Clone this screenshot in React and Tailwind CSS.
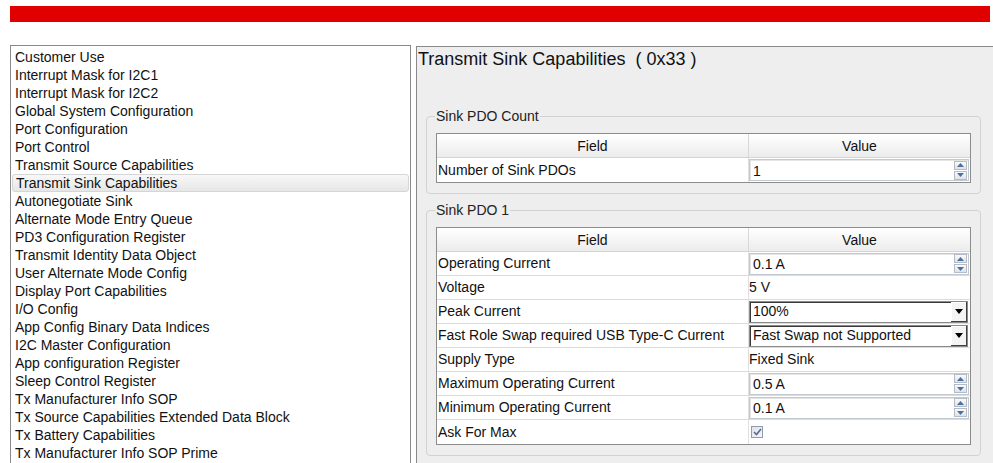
import React from 'react';

const items = [
    'Customer Use',
    'Interrupt Mask for I2C1',
    'Interrupt Mask for I2C2',
    'Global System Configuration',
    'Port Configuration',
    'Port Control',
    'Transmit Source Capabilities',
    'Transmit Sink Capabilities',
    'Autonegotiate Sink',
    'Alternate Mode Entry Queue',
    'PD3 Configuration Register',
    'Transmit Identity Data Object',
    'User Alternate Mode Config',
    'Display Port Capabilities',
    'I/O Config',
    'App Config Binary Data Indices',
    'I2C Master Configuration',
    'App configuration Register',
    'Sleep Control Register',
    'Tx Manufacturer Info SOP',
    'Tx Source Capabilities Extended Data Block',
    'Tx Battery Capabilities',
    'Tx Manufacturer Info SOP Prime',
];

const Spinner = ({ value }) => (
    <div className="flex h-[22px] w-full items-center border border-[#c3c9d2] bg-white shadow-[inset_1px_1px_0_#e4e4e4]">
        <span className="flex-1 pl-[3px] pt-[2px]">{value}</span>
        <div className="mr-[1px] flex flex-col gap-[1px]">
            <div className="flex h-[9px] w-[13px] items-center justify-center border border-[#b4bcc8] bg-gradient-to-b from-[#fafafa] to-[#e2e2e2]">
                <svg width="7" height="4" viewBox="0 0 7 4"><path d="M0 4 L3.5 0 L7 4 Z" fill="#4a6ea8" /></svg>
            </div>
            <div className="flex h-[9px] w-[13px] items-center justify-center border border-[#b4bcc8] bg-gradient-to-b from-[#fafafa] to-[#e2e2e2]">
                <svg width="7" height="4" viewBox="0 0 7 4"><path d="M0 0 L3.5 4 L7 0 Z" fill="#4a6ea8" /></svg>
            </div>
        </div>
    </div>
);

const Dropdown = ({ value }) => (
    <div className="flex h-[22px] w-[219px] items-center border border-[#8a8a8a] bg-white shadow-[inset_1px_1px_0_#3a3a3a]">
        <span className="flex-1 pl-[3px]">{value}</span>
        <div className="flex h-[20px] w-[16px] flex-col items-center justify-center bg-[#f4f4f4] shadow-[inset_-1px_-1px_0_#404040,inset_1px_1px_0_#ffffff]">
            <svg width="8" height="5" viewBox="0 0 8 5"><path d="M0 0 L4 5 L8 0 Z" fill="#000" /></svg>
        </div>
    </div>
);

const Check = () => (
    <div className="ml-[2px] flex h-[12px] w-[12px] items-center justify-center border border-[#8e9bb0] bg-gradient-to-br from-[#dfe3ea] to-[#f4f5f8]">
        <svg width="9" height="8" viewBox="0 0 9 8"><path d="M1 4 L3.5 6.5 L8 1" stroke="#5b6a86" strokeWidth="1.6" fill="none" /></svg>
    </div>
);

const Table = ({ rows }) => (
    <div className="border border-[#8c8c8c] bg-white">
        <div className="grid h-[24px] grid-cols-[312px_1fr] border-b border-[#d4d4d4] bg-gradient-to-b from-white to-[#ececec]">
            <div className="flex items-center justify-center border-r border-[#d8d8d8] pt-[1px]">Field</div>
            <div className="flex items-center justify-center pt-[1px]">Value</div>
        </div>
        {rows.map((r, i) => (
            <div
                key={r.label}
                className={`grid h-[24px] grid-cols-[312px_1fr] ${i < rows.length - 1 ? 'border-b border-[#dcdcdc]' : ''}`}
            >
                <div className="flex items-center border-r border-[#e0e0e0] pl-[1px]">{r.label}</div>
                <div className="flex items-center pr-[1px]">
                    {r.type === 'spin' && <Spinner value={r.value} />}
                    {r.type === 'drop' && <Dropdown value={r.value} />}
                    {r.type === 'text' && <span>{r.value}</span>}
                    {r.type === 'check' && <Check />}
                </div>
            </div>
        ))}
    </div>
);

const Group = ({ title, className, children }) => (
    <fieldset className={`ml-[9px] mr-[12px] rounded-[4px] border border-[#d2d2d2] px-[9px] pb-[10px] pt-[9px] ${className}`}>
        <legend className="ml-[-1px] px-[1px] leading-[16px] text-[#222]">{title}</legend>
        {children}
    </fieldset>
);

const App = () => {
    return (
        <div
            className="h-[463px] w-[993px] overflow-hidden bg-white text-[14px] text-[#111]"
            style={{ fontFamily: '"Liberation Sans", Arial, sans-serif' }}
        >
            <div className="px-[10px] pt-[6px]">
                <div className="h-[16px] w-[980px] bg-[#e00000]" />
            </div>
            <div className="mt-[23px] flex gap-[5px] pl-[10px]">
                {/* left: register list */}
                <div className="h-[500px] w-[401px] shrink-0 border border-[#8a8a8a] bg-white pt-[2px]">
                    {items.map((it) => (
                        <div
                            key={it}
                            className={
                                it === 'Transmit Sink Capabilities'
                                    ? 'mx-[1px] flex h-[18px] items-center rounded-[3px] border border-[#d6d6d6] bg-gradient-to-b from-[#f8f8f8] to-[#e6e6e6] pl-[3px]'
                                    : 'flex h-[18px] items-center pl-[4px]'
                            }
                        >
                            {it}
                        </div>
                    ))}
                </div>

                {/* right: register detail */}
                <div className="mt-[1px] h-[500px] flex-1 border-l border-t border-[#8a8a8a] bg-[#eeeeee]">
                    <div className="whitespace-pre pl-[1px] pt-[2px] text-[18px] leading-[20px] text-[#111]">
                        Transmit Sink Capabilities  ( 0x33 )
                    </div>
                    <Group title="Sink PDO Count" className="mt-[39px]">
                        <Table rows={[{ label: 'Number of Sink PDOs', type: 'spin', value: '1' }]} />
                    </Group>
                    <Group title="Sink PDO 1" className="mt-[8px]">
                        <Table
                            rows={[
                                { label: 'Operating Current', type: 'spin', value: '0.1 A' },
                                { label: 'Voltage', type: 'text', value: '5 V' },
                                { label: 'Peak Current', type: 'drop', value: '100%' },
                                { label: 'Fast Role Swap required USB Type-C Current', type: 'drop', value: 'Fast Swap not Supported' },
                                { label: 'Supply Type', type: 'text', value: 'Fixed Sink' },
                                { label: 'Maximum Operating Current', type: 'spin', value: '0.5 A' },
                                { label: 'Minimum Operating Current', type: 'spin', value: '0.1 A' },
                                { label: 'Ask For Max', type: 'check' },
                            ]}
                        />
                    </Group>
                </div>
            </div>
        </div>
    );
};

export default App;
